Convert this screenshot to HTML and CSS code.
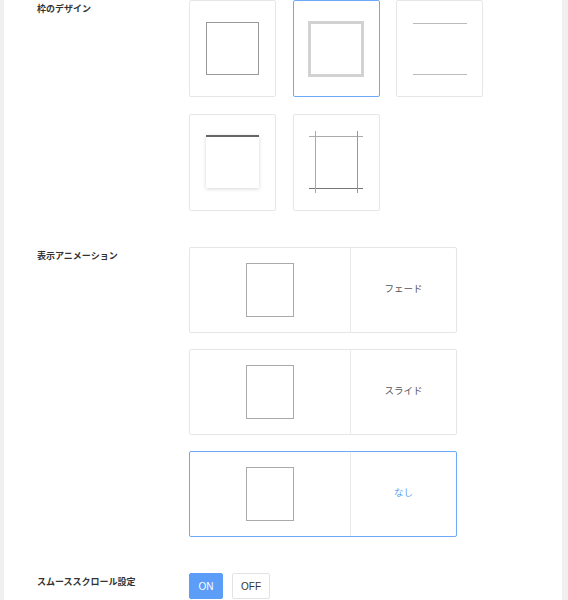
FILE: index.html
```html
<!DOCTYPE html>
<html lang="ja">
<head>
<meta charset="utf-8">
<link rel="stylesheet" href="styles.css">
</head>
<body>
<div class="panel">
  <section class="row">
    <div class="label">枠のデザイン</div>
    <div class="frame-grid">
      <div class="card"><div class="fr fr-simple"></div></div>
      <div class="card selected"><div class="fr fr-thick"></div></div>
      <div class="card"><div class="fr fr-lines"></div></div>
      <div class="card"><div class="fr fr-shadow"></div></div>
      <div class="card">
        <svg class="crop" width="56" height="64" viewBox="0 0 56 64">
          <line x1="0" y1="5.5" x2="54" y2="5.5" stroke="#aaa" stroke-width="1"/>
          <line x1="0" y1="57.5" x2="54" y2="57.5" stroke="#777" stroke-width="1"/>
          <line x1="6.5" y1="0" x2="6.5" y2="62" stroke="#aaa" stroke-width="1"/>
          <line x1="48.5" y1="0" x2="48.5" y2="62" stroke="#999" stroke-width="1"/>
        </svg>
      </div>
    </div>
  </section>

  <section class="row">
    <div class="label">表示アニメーション</div>
    <div class="anim-list">
      <div class="anim">
        <div class="anim-preview"><div class="anim-box"></div></div>
        <div class="anim-name">フェード</div>
      </div>
      <div class="anim">
        <div class="anim-preview"><div class="anim-box"></div></div>
        <div class="anim-name">スライド</div>
      </div>
      <div class="anim selected">
        <div class="anim-preview"><div class="anim-box"></div></div>
        <div class="anim-name">なし</div>
      </div>
    </div>
  </section>

  <section class="row">
    <div class="label">スムーススクロール設定</div>
    <div class="toggle">
      <button class="btn on">ON</button>
      <button class="btn">OFF</button>
    </div>
  </section>
</div>
</body>
</html>
```

FILE: styles.css
```css
html, body {
  margin: 0;
  padding: 0;
  background: #f0f0f0;
  font-family: "Noto Sans CJK JP", "Noto Sans", "Liberation Sans", sans-serif;
}
.panel {
  background: #fff;
  margin: 0 6px 0 4px;
  padding: 0 0 40px 33px;
  min-height: 600px;
  box-sizing: border-box;
}
.row {
  display: grid;
  grid-template-columns: 152px 1fr;
  margin-bottom: 36px;
}
.label {
  font-size: 9px;
  font-weight: bold;
  color: #333;
  line-height: 13px;
  padding-top: 2px;
}
.frame-grid {
  display: grid;
  grid-template-columns: repeat(3, 87px);
  grid-auto-rows: 97px;
  column-gap: 16.5px;
  row-gap: 17px;
}
.card {
  border: 1px solid #e6e6e6;
  border-radius: 2px;
  display: flex;
  align-items: center;
  justify-content: center;
  box-sizing: border-box;
  background: #fff;
}
.card.selected {
  border-color: #6ea8f8;
}
.fr {
  box-sizing: border-box;
}
.fr-simple {
  width: 53px;
  height: 53px;
  border: 1px solid #999;
}
.fr-thick {
  width: 56px;
  height: 56px;
  border: 3px solid #d2d2d2;
}
.fr-lines {
  width: 54px;
  height: 52px;
  border-top: 1px solid #bbb;
  border-bottom: 1px solid #bbb;
}
.fr-shadow {
  width: 53px;
  height: 53px;
  border-top: 2px solid #666;
  box-shadow: 0 1px 4px rgba(0, 0, 0, 0.16);
  margin-top: -2px;
}
.crop {
  display: block;
  margin-left: 2px;
}
.anim-list {
  display: flex;
  flex-direction: column;
  gap: 16px;
}
.anim {
  width: 268px;
  height: 86px;
  border: 1px solid #e6e6e6;
  border-radius: 2px;
  display: flex;
  box-sizing: border-box;
}
.anim.selected {
  border: 1.5px solid #6ea8f8;
}
.anim-preview {
  width: 160px;
  border-right: 1px solid #ebebeb;
  display: flex;
  align-items: center;
  justify-content: center;
}
.anim-box {
  width: 48px;
  height: 54px;
  border: 1px solid #aaa;
  box-sizing: border-box;
}
.anim-name {
  flex: 1;
  display: flex;
  align-items: center;
  justify-content: center;
  font-size: 9.5px;
  color: #555;
  padding-bottom: 5px;
}
.anim.selected .anim-name {
  color: #5c9df7;
}
.toggle {
  display: flex;
  gap: 9px;
}
.btn {
  height: 26px;
  border: 1px solid #e3e3e3;
  border-radius: 2px;
  background: #fff;
  color: #333;
  font-family: "Liberation Sans", Arial, sans-serif;
  font-size: 10px;
  padding: 0;
  width: 38px;
}
.btn.on {
  width: 34px;
  background: #5c9df7;
  border-color: #5c9df7;
  color: #fff;
}
```
